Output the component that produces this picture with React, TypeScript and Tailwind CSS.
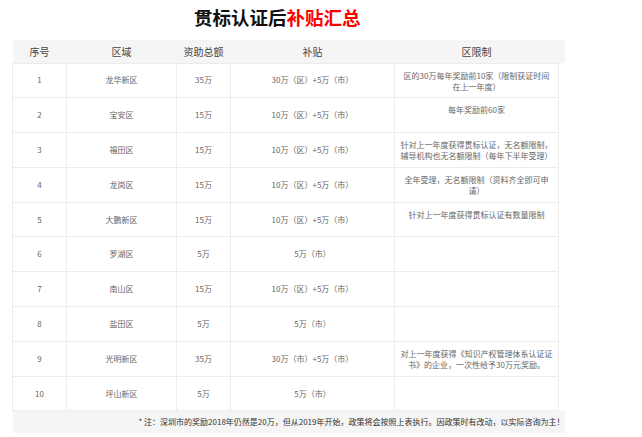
import React from "react";

type Row = { n: string; area: string; total: string; sub: string; limit: string[] };

const rows: Row[] = [
  { n: "1", area: "龙华新区", total: "35万", sub: "30万（区）+5万（市）", limit: ["区的30万每年奖励前10家（限制获证时间", "在上一年度）"] },
  { n: "2", area: "宝安区", total: "15万", sub: "10万（区）+5万（市）", limit: ["每年奖励前60家"] },
  { n: "3", area: "福田区", total: "15万", sub: "10万（区）+5万（市）", limit: ["针对上一年度获得贯标认证，无名额限制，", "辅导机构也无名额限制（每年下半年受理）"] },
  { n: "4", area: "龙岗区", total: "15万", sub: "10万（区）+5万（市）", limit: ["全年受理，无名额限制（资料齐全即可申", "请）"] },
  { n: "5", area: "大鹏新区", total: "15万", sub: "10万（区）+5万（市）", limit: ["针对上一年度获得贯标认证有数量限制"] },
  { n: "6", area: "罗湖区", total: "5万", sub: "5万（市）", limit: [] },
  { n: "7", area: "南山区", total: "15万", sub: "10万（区）+5万（市）", limit: [] },
  { n: "8", area: "盐田区", total: "5万", sub: "5万（市）", limit: [] },
  { n: "9", area: "光明新区", total: "35万", sub: "30万（市）+5万（市）", limit: ["对上一年度获得《知识产权管理体系认证证", "书》的企业，一次性给予30万元奖励。"] },
  { n: "10", area: "坪山新区", total: "5万", sub: "5万（市）", limit: [] },
];

const font = { fontFamily: '"Noto Sans CJK SC", "Noto Sans", sans-serif' };

export default function App() {
  const td = "border border-[#ececec] text-center align-middle text-[8px] text-[#666] h-[34.8px] p-0";
  return (
    <div className="w-[642px] h-[437px] bg-white overflow-hidden" style={font}>
      <div className="h-[40px] pl-[194px] pt-[3px]">
        <span className="text-[18.5px] font-bold leading-[28px] text-[#111]" style={{ fontFamily: '"Noto Sans CJK SC", sans-serif' }}>
          贯标认证后<span className="text-[#ff0000]">补贴汇总</span>
        </span>
      </div>
      <table className="ml-[12px] border-collapse table-fixed w-[552px]">
        <colgroup>
          <col className="w-[54px]" />
          <col className="w-[110px]" />
          <col className="w-[54px]" />
          <col className="w-[164px]" />
          <col className="w-[164px]" />
          <col className="w-[6px]" />
        </colgroup>
        <thead>
          <tr className="bg-[#f5f5f5] h-[23px]">
            {["序号", "区域", "资助总额", "补贴", "区限制"].map((h) => (
              <th key={h} className="font-normal text-[10px] text-[#444] text-center align-middle p-0">
                {h}
              </th>
            ))}
            <th className="p-0" />
          </tr>
        </thead>
        <tbody>
          {rows.map((r) => (
            <tr key={r.n}>
              <td className={td}>{r.n}</td>
              <td className={td}>{r.area}</td>
              <td className={td}>{r.total}</td>
              <td className={td}>{r.sub}</td>
              <td className="border border-[#ececec] text-center align-top text-[8px] leading-[11px] text-[#666] h-[34.8px] p-0 pt-[6px] whitespace-nowrap">
                {r.limit.map((l, i) => (
                  <div key={i}>{l}</div>
                ))}
              </td>
              <td className="p-0" />
            </tr>
          ))}
          <tr className="bg-[#f5f5f5] h-[22px]">
            <td colSpan={6} className="text-right align-middle text-[8px] text-[#333] p-0 whitespace-nowrap">
              * 注：深圳市的奖励2018年仍然是20万，但从2019年开始，政策将会按照上表执行。因政策时有改动，以实际咨询为主！
            </td>
          </tr>
        </tbody>
      </table>
    </div>
  );
}
